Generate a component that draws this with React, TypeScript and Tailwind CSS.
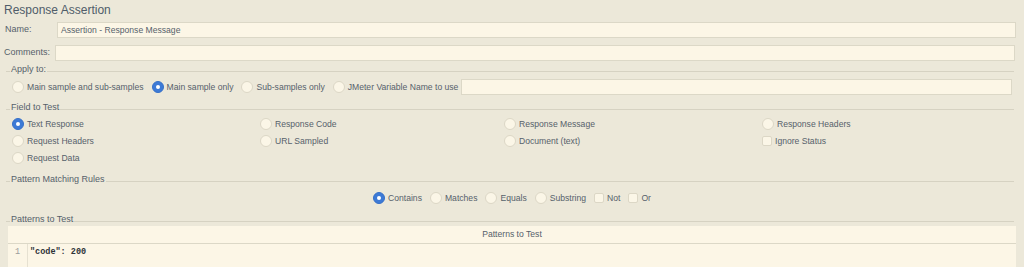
import React from "react";

const fieldOptions = [
  { label: "Text Response", kind: "radio", checked: true },
  { label: "Response Code", kind: "radio" },
  { label: "Response Message", kind: "radio" },
  { label: "Response Headers", kind: "radio" },
  { label: "Request Headers", kind: "radio" },
  { label: "URL Sampled", kind: "radio" },
  { label: "Document (text)", kind: "radio" },
  { label: "Ignore Status", kind: "check" },
  { label: "Request Data", kind: "radio" },
];

function Radio({ checked = false }: { checked?: boolean }) {
  if (checked) {
    return (
      <span className="w-[12px] h-[12px] rounded-full bg-[#3d7ad6] border border-[#3670c8] flex items-center justify-center shrink-0">
        <span className="w-[4px] h-[4px] rounded-full bg-white" />
      </span>
    );
  }
  return (
    <span className="w-[12px] h-[12px] rounded-full bg-[#fbf6e7] border border-[#dcd7c6] shrink-0" />
  );
}

function Check() {
  return (
    <span className="w-[10px] h-[10px] rounded-[2px] bg-[#fbf6e7] border border-[#dcd7c6] shrink-0" />
  );
}

function Option({
  label,
  kind = "radio",
  checked = false,
}: {
  label: string;
  kind?: string;
  checked?: boolean;
}) {
  return (
    <span className="flex items-center gap-[3px] text-[8.6px]">
      {kind === "radio" ? <Radio checked={checked} /> : <Check />}
      <span>{label}</span>
    </span>
  );
}

function Legend({ title, className = "" }: { title: string; className?: string }) {
  return (
    <div className={`flex items-center h-[12px] pl-[6px] pr-[10px] ${className}`}>
      <span className="w-[4px] h-px mt-[3px] bg-[#d6d2c2]" />
      <span className="px-[1px]">{title}</span>
      <span className="flex-1 h-px mt-[3px] bg-[#d6d2c2]" />
    </div>
  );
}

export default function App() {
  return (
    <div className="w-[1024px] h-[267px] overflow-hidden bg-[#ece8d9] text-[#56616b] text-[9px] font-['Liberation_Sans',Arial,sans-serif]">
      {/* Title */}
      <div className="h-[19px] pl-[4px] flex items-center text-[12px] text-[#4f5c69]">
        Response Assertion
      </div>

      {/* Name */}
      <div className="flex items-center h-[16px] mt-[3px] pr-[8px]">
        <span className="w-[57px] pl-[5px]">Name:</span>
        <div className="flex-1 h-[16px] bg-[#fcf6e6] border border-[#dcd8c7] flex items-center pl-[3px] text-[8.6px]">
          Assertion - Response Message
        </div>
      </div>

      {/* Comments */}
      <div className="flex items-center h-[16px] mt-[7px] pr-[9px]">
        <span className="w-[55px] pl-[4px]">Comments:</span>
        <div className="flex-1 h-[16px] bg-[#fcf6e6] border border-[#dcd8c7]" />
      </div>

      {/* Apply to */}
      <Legend title="Apply to:" className="mt-[3px]" />
      <div className="flex items-center h-[16px] mt-[3px] pl-[12px] pr-[12px]">
        <div className="flex items-center gap-[8px]">
          <Option label="Main sample and sub-samples" />
          <Option label="Main sample only" checked />
          <Option label="Sub-samples only" />
          <Option label="JMeter Variable Name to use" />
        </div>
        <div className="flex-1 ml-[3px] h-[16px] bg-[#fcf6e6] border border-[#dcd8c7]" />
      </div>

      {/* Field to Test */}
      <Legend title="Field to Test" className="mt-[7px]" />
      <div className="grid grid-cols-[248px_244px_258px_1fr] auto-rows-[17px] items-center pl-[12px] mt-[2px]">
        {fieldOptions.map((o) => (
          <Option key={o.label} label={o.label} kind={o.kind} checked={o.checked} />
        ))}
      </div>

      {/* Pattern Matching Rules */}
      <Legend title="Pattern Matching Rules" className="mt-[7px]" />
      <div className="flex items-center justify-center gap-[8px] h-[16px] mt-[4px]">
        <Option label="Contains" checked />
        <Option label="Matches" />
        <Option label="Equals" />
        <Option label="Substring" />
        <Option label="Not" kind="check" />
        <Option label="Or" kind="check" />
      </div>

      {/* Patterns to Test */}
      <Legend title="Patterns to Test" className="mt-[8px]" />
      <div className="ml-[8px] mr-[8px] bg-[#fcf6e6]">
        <div className="h-[18px] flex items-center justify-center border-b border-[#dcd8c7] text-[8.6px]">
          Patterns to Test
        </div>
        <div className="flex h-[40px]">
          <div className="w-[20px] pt-[2px] text-right pr-[7px] text-[#9a9d9c] font-['Liberation_Mono',monospace] text-[8.5px] border-r border-[#e6e1d1]">
            1
          </div>
          <div className="pl-[2px] pt-[2px] font-['Liberation_Mono',monospace] font-bold text-[8.5px] text-[#2e3338]">
            "code": 200
          </div>
        </div>
      </div>
    </div>
  );
}
